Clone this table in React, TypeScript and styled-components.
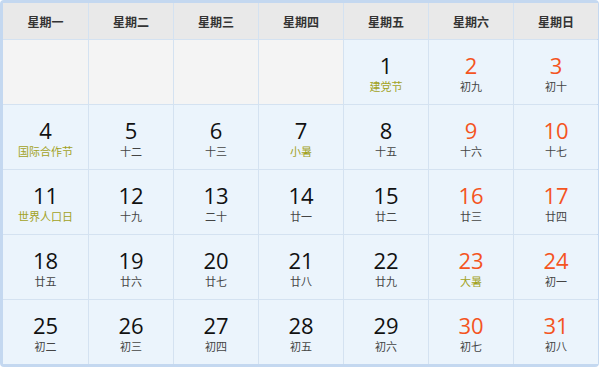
import React from 'react';
import styled, { createGlobalStyle } from 'styled-components';

type Day = {
   num: number;
   sub: string;
   fest?: boolean;
};

const weekNames = ['星期一', '星期二', '星期三', '星期四', '星期五', '星期六', '星期日'];

const days: Day[] = [
   { num: 1, sub: '建党节', fest: true },
   { num: 2, sub: '初九' },
   { num: 3, sub: '初十' },
   { num: 4, sub: '国际合作节', fest: true },
   { num: 5, sub: '十二' },
   { num: 6, sub: '十三' },
   { num: 7, sub: '小暑', fest: true },
   { num: 8, sub: '十五' },
   { num: 9, sub: '十六' },
   { num: 10, sub: '十七' },
   { num: 11, sub: '世界人口日', fest: true },
   { num: 12, sub: '十九' },
   { num: 13, sub: '二十' },
   { num: 14, sub: '廿一' },
   { num: 15, sub: '廿二' },
   { num: 16, sub: '廿三' },
   { num: 17, sub: '廿四' },
   { num: 18, sub: '廿五' },
   { num: 19, sub: '廿六' },
   { num: 20, sub: '廿七' },
   { num: 21, sub: '廿八' },
   { num: 22, sub: '廿九' },
   { num: 23, sub: '大暑', fest: true },
   { num: 24, sub: '初一' },
   { num: 25, sub: '初二' },
   { num: 26, sub: '初三' },
   { num: 27, sub: '初四' },
   { num: 28, sub: '初五' },
   { num: 29, sub: '初六' },
   { num: 30, sub: '初七' },
   { num: 31, sub: '初八' },
];

// month starts on Friday
const leadingBlanks = 4;

const App: React.FC = () => {
   return (
      <>
         <GlobalStyle />
         <Calendar>
            {weekNames.map(name => (
               <HeadCell key={name}>{name}</HeadCell>
            ))}
            {Array.from({ length: leadingBlanks }).map((_, i) => (
               <EmptyCell key={`b${i}`} />
            ))}
            {days.map((d, i) => {
               const col = (i + leadingBlanks) % 7;
               const weekend = col >= 5;
               return (
                  <DayCell key={d.num}>
                     <Num $weekend={weekend}>{d.num}</Num>
                     <Sub $fest={d.fest}>{d.sub}</Sub>
                  </DayCell>
               );
            })}
         </Calendar>
      </>
   );
};

export default App;

const GlobalStyle = createGlobalStyle`
   html, body {
      margin: 0;
      padding: 0;
      background: #ffffff;
   }
   body {
      font-family: "Noto Sans", "Noto Sans CJK SC", sans-serif;
   }
`;

const Calendar = styled.div`
   width: 594px;
   display: grid;
   grid-template-columns: 85px repeat(6, 84px);
   grid-template-rows: 36px repeat(5, 64px);
   gap: 1px;
   background: #d4e2f1;
   border: 3px solid #c4d8f0;
   border-right-width: 2px;
   border-radius: 4px;
`;

const HeadCell = styled.div`
   display: flex;
   align-items: center;
   justify-content: center;
   background: #e9e9e9;
   color: #333;
   font-size: 12px;
   font-weight: bold;
   font-family: "Noto Sans CJK SC", sans-serif;
`;

const EmptyCell = styled.div`
   background: #f4f4f4;
`;

const DayCell = styled.div`
   display: flex;
   flex-direction: column;
   align-items: center;
   justify-content: center;
   gap: 2px;
   background: #ebf4fc;
   padding-top: 2px;
`;

const Num = styled.div<{ $weekend: boolean }>`
   font-family: "Open Sans", "Noto Sans", sans-serif;
   font-size: 22px;
   line-height: 24px;
   color: ${p => (p.$weekend ? '#f4541f' : '#111')};
`;

const Sub = styled.div<{ $fest?: boolean }>`
   font-family: "Noto Sans CJK SC", sans-serif;
   font-size: 11px;
   line-height: 14px;
   color: ${p => (p.$fest ? '#a2a21c' : '#444')};
`;
